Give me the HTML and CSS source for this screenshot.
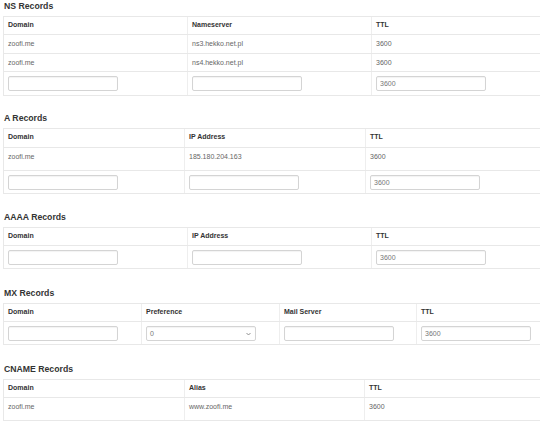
FILE: index.html
```html
<!DOCTYPE html>
<html>
<head>
<meta charset="utf-8">
<link rel="stylesheet" href="styles.css">
</head>
<body>
<div class="page">

  <section class="section">
    <h4 class="title">NS Records</h4>
    <div class="tbl cols-ns">
      <div class="row head"><div class="cell">Domain</div><div class="cell">Nameserver</div><div class="cell">TTL</div></div>
      <div class="row data tall19"><div class="cell">zoofi.me</div><div class="cell">ns3.hekko.net.pl</div><div class="cell">3600</div></div>
      <div class="row data"><div class="cell">zoofi.me</div><div class="cell">ns4.hekko.net.pl</div><div class="cell">3600</div></div>
      <div class="row form form24"><div class="cell"><input class="field" type="text"></div><div class="cell"><input class="field" type="text"></div><div class="cell"><input class="field" type="text" value="3600"></div></div>
    </div>
  </section>

  <section class="section first-gap">
    <h4 class="title">A Records</h4>
    <div class="tbl cols-a">
      <div class="row head"><div class="cell">Domain</div><div class="cell">IP Address</div><div class="cell">TTL</div></div>
      <div class="row data tall23"><div class="cell">zoofi.me</div><div class="cell">185.180.204.163</div><div class="cell">3600</div></div>
      <div class="row form"><div class="cell"><input class="field" type="text"></div><div class="cell"><input class="field" type="text"></div><div class="cell"><input class="field" type="text" value="3600"></div></div>
    </div>
  </section>

  <section class="section">
    <h4 class="title">AAAA Records</h4>
    <div class="tbl cols-ns">
      <div class="row head"><div class="cell">Domain</div><div class="cell">IP Address</div><div class="cell">TTL</div></div>
      <div class="row form"><div class="cell"><input class="field" type="text"></div><div class="cell"><input class="field" type="text"></div><div class="cell"><input class="field" type="text" value="3600"></div></div>
    </div>
  </section>

  <section class="section">
    <h4 class="title">MX Records</h4>
    <div class="tbl cols-mx">
      <div class="row head"><div class="cell">Domain</div><div class="cell">Preference</div><div class="cell">Mail Server</div><div class="cell">TTL</div></div>
      <div class="row form"><div class="cell"><input class="field" type="text"></div><div class="cell"><div class="field select"><span>0</span><svg class="chev" width="5" height="4" viewBox="0 0 5 4"><path d="M0.5 1 L2.5 3 L4.5 1" fill="none" stroke="#777" stroke-width="0.8"/></svg></div></div><div class="cell"><input class="field" type="text"></div><div class="cell"><input class="field" type="text" value="3600"></div></div>
    </div>
  </section>

  <section class="section">
    <h4 class="title">CNAME Records</h4>
    <div class="tbl cols-cname">
      <div class="row head"><div class="cell">Domain</div><div class="cell">Alias</div><div class="cell">TTL</div></div>
      <div class="row data tall23"><div class="cell">zoofi.me</div><div class="cell">www.zoofi.me</div><div class="cell">3600</div></div>
    </div>
  </section>

</div>
</body>
</html>
```

FILE: styles.css
```css
* { box-sizing: border-box; }

html, body {
  margin: 0;
  padding: 0;
  background: #fff;
  overflow: hidden;
}

body {
  font-family: "Liberation Sans", Arial, sans-serif;
  font-size: 7px;
  line-height: 10px;
  color: #666;
}

.page {
  padding: 1px 0 0 3px;
}

.section + .section {
  margin-top: 18.6px;
}

.section.first-gap {
  margin-top: 17px;
}

.title {
  margin: 0 0 5px 1px;
  font-size: 8.7px;
  line-height: 10px;
  font-weight: bold;
  color: #333;
}

.tbl {
  border-top: 1px solid #e8e8e8;
  border-left: 1px solid #e8e8e8;
}

.row {
  display: grid;
  border-bottom: 1px solid #e8e8e8;
}

.cols-ns .row { grid-template-columns: 184px 184px 1fr; }
.cols-a .row { grid-template-columns: 181px 181px 1fr; }
.cols-mx .row { grid-template-columns: 138px 138px 137px 1fr; }
.cols-cname .row { grid-template-columns: 181px 180px 1fr; }

.cell {
  padding: 4px 4px 0 4px;
  border-right: 1px solid #eeeeee;
  white-space: nowrap;
  overflow: hidden;
}

.cell:last-child { border-right: none; }

.head { height: 18.3px; }
.head .cell {
  padding-top: 3px;
  font-weight: bold;
  color: #333;
}

.data { height: 18px; }
.tall19 { height: 19px; }
.tall23 { height: 23px; }

.form { height: 23px; }
.form24 { height: 24px; }

.field {
  display: block;
  width: 110px;
  height: 15px;
  margin: 0;
  padding: 0 3px;
  border: 1px solid #d4d4d4;
  border-radius: 2px;
  background: #fff;
  box-shadow: inset 0 1px 1px rgba(0,0,0,0.05);
  font-family: "Liberation Sans", Arial, sans-serif;
  font-size: 7px;
  line-height: 13px;
  color: #777;
  outline: none;
}

.select {
  display: flex;
  align-items: center;
  justify-content: space-between;
  padding: 0 4px 0 3px;
}

.chev { display: block; }
```
